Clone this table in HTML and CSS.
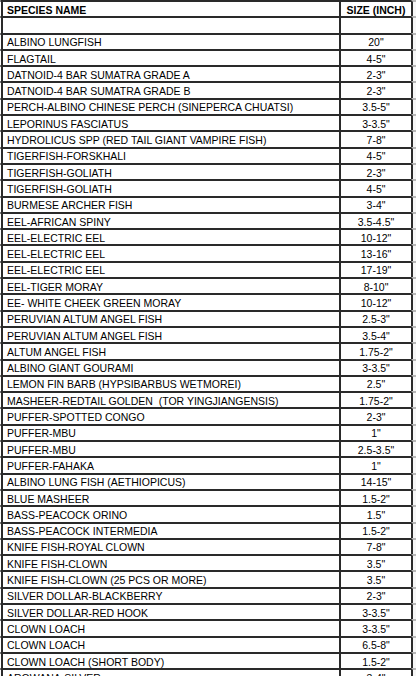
FILE: index.html
```html
<!DOCTYPE html>
<html lang="en">
<head>
<meta charset="utf-8">
<title>Species list</title>
<link rel="stylesheet" href="styles.css">
</head>
<body>
<div class="sheet">
  <div class="row head"><span class="stub"></span><span class="name">SPECIES NAME</span><span class="size">SIZE (INCH)</span><span class="extra"></span></div>
  <div class="row"><span class="stub"></span><span class="name"></span><span class="size"></span><span class="extra"></span></div>
  <div class="row"><span class="stub"></span><span class="name">ALBINO LUNGFISH</span><span class="size">20"</span><span class="extra"></span></div>
  <div class="row"><span class="stub"></span><span class="name">FLAGTAIL</span><span class="size">4-5"</span><span class="extra"></span></div>
  <div class="row"><span class="stub"></span><span class="name">DATNOID-4 BAR SUMATRA GRADE A</span><span class="size">2-3"</span><span class="extra"></span></div>
  <div class="row"><span class="stub"></span><span class="name">DATNOID-4 BAR SUMATRA GRADE B</span><span class="size">2-3"</span><span class="extra"></span></div>
  <div class="row"><span class="stub"></span><span class="name">PERCH-ALBINO CHINESE PERCH (SINEPERCA CHUATSI)</span><span class="size">3.5-5"</span><span class="extra"></span></div>
  <div class="row"><span class="stub"></span><span class="name">LEPORINUS FASCIATUS</span><span class="size">3-3.5"</span><span class="extra"></span></div>
  <div class="row"><span class="stub"></span><span class="name">HYDROLICUS SPP (RED TAIL GIANT VAMPIRE FISH)</span><span class="size">7-8"</span><span class="extra"></span></div>
  <div class="row"><span class="stub"></span><span class="name">TIGERFISH-FORSKHALI</span><span class="size">4-5"</span><span class="extra"></span></div>
  <div class="row"><span class="stub"></span><span class="name">TIGERFISH-GOLIATH</span><span class="size">2-3"</span><span class="extra"></span></div>
  <div class="row"><span class="stub"></span><span class="name">TIGERFISH-GOLIATH</span><span class="size">4-5"</span><span class="extra"></span></div>
  <div class="row"><span class="stub"></span><span class="name">BURMESE ARCHER FISH</span><span class="size">3-4"</span><span class="extra"></span></div>
  <div class="row"><span class="stub"></span><span class="name">EEL-AFRICAN SPINY</span><span class="size">3.5-4.5"</span><span class="extra"></span></div>
  <div class="row"><span class="stub"></span><span class="name">EEL-ELECTRIC EEL</span><span class="size">10-12"</span><span class="extra"></span></div>
  <div class="row"><span class="stub"></span><span class="name">EEL-ELECTRIC EEL</span><span class="size">13-16"</span><span class="extra"></span></div>
  <div class="row"><span class="stub"></span><span class="name">EEL-ELECTRIC EEL</span><span class="size">17-19"</span><span class="extra"></span></div>
  <div class="row"><span class="stub"></span><span class="name">EEL-TIGER MORAY</span><span class="size">8-10"</span><span class="extra"></span></div>
  <div class="row"><span class="stub"></span><span class="name">EE- WHITE CHEEK GREEN MORAY</span><span class="size">10-12"</span><span class="extra"></span></div>
  <div class="row"><span class="stub"></span><span class="name">PERUVIAN ALTUM ANGEL FISH</span><span class="size">2.5-3"</span><span class="extra"></span></div>
  <div class="row"><span class="stub"></span><span class="name">PERUVIAN ALTUM ANGEL FISH</span><span class="size">3.5-4"</span><span class="extra"></span></div>
  <div class="row"><span class="stub"></span><span class="name">ALTUM ANGEL FISH</span><span class="size">1.75-2"</span><span class="extra"></span></div>
  <div class="row"><span class="stub"></span><span class="name">ALBINO GIANT GOURAMI</span><span class="size">3-3.5"</span><span class="extra"></span></div>
  <div class="row"><span class="stub"></span><span class="name">LEMON FIN BARB (HYPSIBARBUS WETMOREI)</span><span class="size">2.5"</span><span class="extra"></span></div>
  <div class="row"><span class="stub"></span><span class="name">MASHEER-REDTAIL GOLDEN&nbsp; (TOR YINGJIANGENSIS)</span><span class="size">1.75-2"</span><span class="extra"></span></div>
  <div class="row"><span class="stub"></span><span class="name">PUFFER-SPOTTED CONGO</span><span class="size">2-3"</span><span class="extra"></span></div>
  <div class="row"><span class="stub"></span><span class="name">PUFFER-MBU</span><span class="size">1"</span><span class="extra"></span></div>
  <div class="row"><span class="stub"></span><span class="name">PUFFER-MBU</span><span class="size">2.5-3.5"</span><span class="extra"></span></div>
  <div class="row"><span class="stub"></span><span class="name">PUFFER-FAHAKA</span><span class="size">1"</span><span class="extra"></span></div>
  <div class="row"><span class="stub"></span><span class="name">ALBINO LUNG FISH (AETHIOPICUS)</span><span class="size">14-15"</span><span class="extra"></span></div>
  <div class="row"><span class="stub"></span><span class="name">BLUE MASHEER</span><span class="size">1.5-2"</span><span class="extra"></span></div>
  <div class="row"><span class="stub"></span><span class="name">BASS-PEACOCK ORINO</span><span class="size">1.5"</span><span class="extra"></span></div>
  <div class="row"><span class="stub"></span><span class="name">BASS-PEACOCK INTERMEDIA</span><span class="size">1.5-2"</span><span class="extra"></span></div>
  <div class="row"><span class="stub"></span><span class="name">KNIFE FISH-ROYAL CLOWN</span><span class="size">7-8"</span><span class="extra"></span></div>
  <div class="row"><span class="stub"></span><span class="name">KNIFE FISH-CLOWN</span><span class="size">3.5"</span><span class="extra"></span></div>
  <div class="row"><span class="stub"></span><span class="name">KNIFE FISH-CLOWN (25 PCS OR MORE)</span><span class="size">3.5"</span><span class="extra"></span></div>
  <div class="row"><span class="stub"></span><span class="name">SILVER DOLLAR-BLACKBERRY</span><span class="size">2-3"</span><span class="extra"></span></div>
  <div class="row"><span class="stub"></span><span class="name">SILVER DOLLAR-RED HOOK</span><span class="size">3-3.5"</span><span class="extra"></span></div>
  <div class="row"><span class="stub"></span><span class="name">CLOWN LOACH</span><span class="size">3-3.5"</span><span class="extra"></span></div>
  <div class="row"><span class="stub"></span><span class="name">CLOWN LOACH</span><span class="size">6.5-8"</span><span class="extra"></span></div>
  <div class="row"><span class="stub"></span><span class="name">CLOWN LOACH (SHORT BODY)</span><span class="size">1.5-2"</span><span class="extra"></span></div>
  <div class="row"><span class="stub"></span><span class="name">AROWANA-SILVER</span><span class="size">3-4"</span><span class="extra"></span></div>
</div>
</body>
</html>
```
FILE: styles.css
```css
html, body {
  margin: 0;
  padding: 0;
  background: #ffffff;
}
body {
  width: 416px;
  height: 676px;
  overflow: hidden;
}
.sheet {
  display: grid;
  grid-auto-rows: 16.3px;
  font-family: "Liberation Sans", Arial, sans-serif;
  font-size: 10.5px;
  color: #000;
}
.row {
  display: grid;
  grid-template-columns: 1px 338px 72px 1fr;
}
.row > span {
  box-sizing: border-box;
  border-top: 2px solid #2a2a2a;
  display: flex;
  align-items: center;
  white-space: nowrap;
  overflow: hidden;
  padding-top: 1px;
}
.stub {
  border-top-color: #777 !important;
}
.name {
  border-left: 2px solid #2a2a2a;
  padding-left: 4px;
}
.size {
  border-left: 2px solid #2a2a2a;
  justify-content: center;
}
.extra {
  border-left: 2px solid #2a2a2a;
  border-top-color: #b5b5b5 !important;
  background: #f6f6f6;
}
.head {
  font-weight: bold;
}
```
